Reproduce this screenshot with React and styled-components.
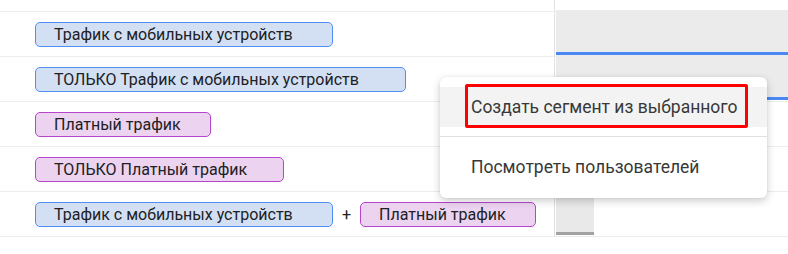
import React from "react";
import styled, { createGlobalStyle } from "styled-components";

const Global = createGlobalStyle`
  html, body { margin: 0; padding: 0; background: #fff; }
  body { font-family: Roboto, "Noto Sans", sans-serif; }
`;

const Page = styled.div`
  position: relative;
  width: 788px;
  height: 254px;
  overflow: hidden;
  background: #fff;
`;

const Table = styled.div`
  display: flex;
  flex-direction: column;
`;

const Row = styled.div`
  display: grid;
  grid-template-columns: 555px 1fr;
  height: ${(p) => p.$h || 45}px;
  box-sizing: border-box;
  border-bottom: 1px solid #ececec;
`;

const LeftCell = styled.div`
  display: flex;
  align-items: center;
  gap: 8px;
  padding-left: 35px;
  border-right: 1px solid #e2e2e2;
`;

const RightCell = styled.div`
  padding-left: 1px;
  display: flex;
  align-items: flex-start;
`;

const Bar = styled.div`
  margin-top: -2px;
  height: 45px;
  box-sizing: border-box;
  width: ${(p) => (p.$w ? `${p.$w}px` : "100%")};
  background: ${(p) => p.$bg || "#ebebeb"};
  border-bottom: ${(p) => p.$bw || 3}px solid ${(p) => p.$line};
  position: relative;
  z-index: 1;
`;

const Chip = styled.div`
  display: flex;
  align-items: center;
  box-sizing: border-box;
  height: 25px;
  width: ${(p) => p.$w}px;
  padding-left: 18px;
  border-radius: 5px;
  border: 1px solid ${(p) => (p.$kind === "paid" ? "#b545cb" : "#4f8ff4")};
  background: ${(p) => (p.$kind === "paid" ? "#ecd4f0" : "#d3e0f3")};
  color: #202124;
  font-size: 16px;
  white-space: nowrap;
`;

const Plus = styled.span`
  font-size: 16px;
  color: #202124;
  padding: 0 1px;
`;

const Menu = styled.div`
  position: absolute;
  left: 440px;
  top: 77px;
  width: 327px;
  height: 121px;
  box-sizing: border-box;
  padding: 10px 0;
  background: #fff;
  border-radius: 6px;
  box-shadow: 0 3px 8px rgba(0, 0, 0, 0.2), 0 0 2px rgba(0, 0, 0, 0.08);
  z-index: 5;
  display: flex;
  flex-direction: column;
`;

const MenuItem = styled.div`
  position: relative;
  height: 40px;
  display: flex;
  align-items: center;
  padding-left: 31px;
  font-size: 17.5px;
  color: #383838;
  background: ${(p) => (p.$active ? "#f3f3f3" : "transparent")};
  white-space: nowrap;
`;

const Highlight = styled.div`
  position: absolute;
  left: 25px;
  top: -3px;
  width: 283px;
  height: 44px;
  box-sizing: border-box;
  border: 3px solid #ff0000;
  border-radius: 2px;
`;

const Divider = styled.div`
  height: 1px;
  background: #e0e0e0;
  margin: 9px 0 10px;
`;

const rows = [
  { chips: [{ t: "Трафик с мобильных устройств", k: "mobile", w: 298 }], bar: { line: "#4a89f3" } },
  { chips: [{ t: "ТОЛЬКО Трафик с мобильных устройств", k: "mobile", w: 371 }], bar: { line: "#4a89f3" } },
  { chips: [{ t: "Платный трафик", k: "paid", w: 176 }] },
  { chips: [{ t: "ТОЛЬКО Платный трафик", k: "paid", w: 249 }] },
  {
    chips: [
      { t: "Трафик с мобильных устройств", k: "mobile", w: 298 },
      { t: "Платный трафик", k: "paid", w: 176 },
    ],
    bar: { line: "#a2a2a2", w: 38, bw: 3, bg: "#e9e9e9" },
  },
];

export default function App() {
  return (
    <Page>
      <Global />
      <Table>
        <Row $h={12}>
          <LeftCell />
          <RightCell />
        </Row>
        {rows.map((r, i) => (
          <Row key={i}>
            <LeftCell>
              {r.chips.map((c, j) => (
                <React.Fragment key={j}>
                  {j > 0 && <Plus>+</Plus>}
                  <Chip $kind={c.k} $w={c.w}>{c.t}</Chip>
                </React.Fragment>
              ))}
            </LeftCell>
            <RightCell>
              {r.bar && <Bar $line={r.bar.line} $w={r.bar.w} $bw={r.bar.bw} $bg={r.bar.bg} />}
            </RightCell>
          </Row>
        ))}
      </Table>
      <Menu>
        <MenuItem $active>
          Создать сегмент из выбранного
          <Highlight />
        </MenuItem>
        <Divider />
        <MenuItem>Посмотреть пользователей</MenuItem>
      </Menu>
    </Page>
  );
}
